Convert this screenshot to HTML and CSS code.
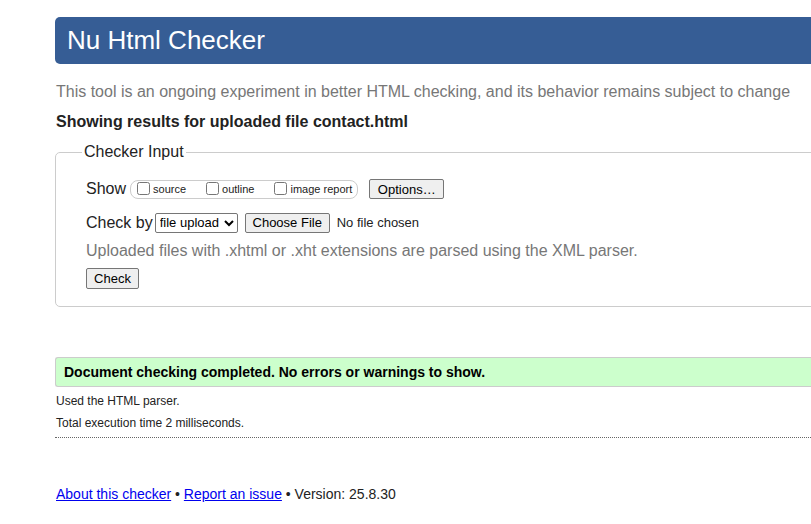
FILE: index.html
```html
<!DOCTYPE html>
<html>
<head>
<meta charset="utf-8">
<title>Nu Html Checker</title>
<link rel="stylesheet" href="styles.css">
</head>
<body>
<div class="page">
  <h1 class="title">Nu Html Checker</h1>
  <p class="intro">This tool is an ongoing experiment in better HTML checking, and its behavior remains subject to change</p>
  <p class="showing">Showing results for uploaded file contact.html</p>
  <fieldset class="input">
    <legend>Checker Input</legend>
    <div class="row show-row">
      <span class="label">Show</span>
      <span class="options">
        <label><input type="checkbox">source</label>
        <label><input type="checkbox">outline</label>
        <label><input type="checkbox">image report</label>
      </span>
      <button class="btn options-btn" type="button">Options…</button>
    </div>
    <div class="row check-row">
      <span class="label">Check by</span>
      <select class="select"><option>file upload</option></select>
      <button class="btn file-btn" type="button">Choose File</button>
      <span class="nofile">No file chosen</span>
    </div>
    <p class="hint">Uploaded files with .xhtml or .xht extensions are parsed using the XML parser.</p>
    <button class="btn check-btn" type="button">Check</button>
  </fieldset>
  <p class="success">Document checking completed. No errors or warnings to show.</p>
  <p class="details">Used the HTML parser.</p>
  <p class="details">Total execution time 2 milliseconds.</p>
  <hr class="sep">
  <p class="footer"><a href="#">About this checker</a> • <a href="#">Report an issue</a> • Version: 25.8.30</p>
</div>
</body>
</html>
```
FILE: styles.css
```css
html, body {
  margin: 0;
  padding: 0;
  background: #fff;
  overflow: hidden;
}
body {
  font-family: "Liberation Sans", Arial, sans-serif;
  color: #222;
}
.page {
  padding-left: 55px;
  width: 900px;
  padding-top: 17px;
}
.title {
  margin: 0;
  height: 47px;
  background: #365d95;
  color: #fff;
  font-weight: normal;
  font-size: 26px;
  line-height: 47px;
  padding-left: 12px;
  border-radius: 5px 0 0 5px;
}
.intro {
  margin: 18px 0 0 1px;
  font-size: 16px;
  line-height: 20px;
  color: #777;
}
.showing {
  margin: 10px 0 0 1px;
  font-size: 16px;
  line-height: 20px;
  font-weight: bold;
  color: #222;
}
.input {
  margin: 11px 0 0 0;
  padding: 6px 0 17px 30px;
  border: 1px solid #ccc;
  border-radius: 5px 0 0 5px;
}
.input legend {
  font-size: 16px;
  padding: 0 2px;
  margin-left: -4px;
  color: #222;
}
.row {
  display: flex;
  align-items: center;
  white-space: nowrap;
}
.label {
  font-size: 16px;
  margin-right: 4px;
}
.show-row {
  margin-top: 11px;
  height: 22px;
}
.options {
  display: inline-flex;
  align-items: center;
  border: 1px solid #ccc;
  border-radius: 8px;
  height: 17px;
  padding: 0 5px 0 6px;
  font-size: 11px;
  gap: 20px;
}
.options label {
  display: inline-flex;
  align-items: center;
}
.options input {
  margin: 0 3px 0 0;
  width: 13px;
  height: 13px;
  position: relative;
  top: -1px;
}
.btn {
  font-family: Arial, "Liberation Sans", sans-serif;
  font-size: 13px;
  padding: 1px 6px;
  border: 1px solid #767676;
  border-radius: 2px;
  background: #efefef;
  color: #000;
  height: 20px;
  white-space: nowrap;
}
.options-btn {
  margin-left: 11px;
  width: 75px;
}
.check-row {
  margin-top: 12px;
  height: 21px;
}
.select {
  font-family: Arial, "Liberation Sans", sans-serif;
  font-size: 13px;
  height: 20px;
  width: 83px;
  margin-left: -2px;
  border: 1px solid #767676;
  border-radius: 2px;
  background: #fff;
  color: #000;
}
.file-btn {
  margin-left: 7px;
  width: 85px;
}
.nofile {
  font-size: 13px;
  margin-left: 7px;
}
.hint {
  margin: 8px 0 0 0;
  font-size: 16px;
  line-height: 20px;
  color: #777;
}
.check-btn {
  margin-top: 7px;
  display: block;
  width: 53px;
  height: 21px;
}
.success {
  margin: 50px 0 0 0;
  background: #ccffcc;
  border: 1px solid #ccc;
  border-right: none;
  border-radius: 3px 0 0 3px;
  padding: 6px 8px;
  font-size: 14px;
  line-height: 16px;
  font-weight: bold;
  color: #000;
}
.details {
  margin: 7px 0 0 1px;
  font-size: 12px;
  line-height: 15px;
}
.sep {
  margin: 6px 0 0 0;
  border: 0;
  border-top: 1px dotted #666;
  height: 0;
}
.footer {
  margin: 48px 0 0 1px;
  font-size: 14px;
  line-height: 17px;
}
.footer a {
  color: #00e;
}
```
